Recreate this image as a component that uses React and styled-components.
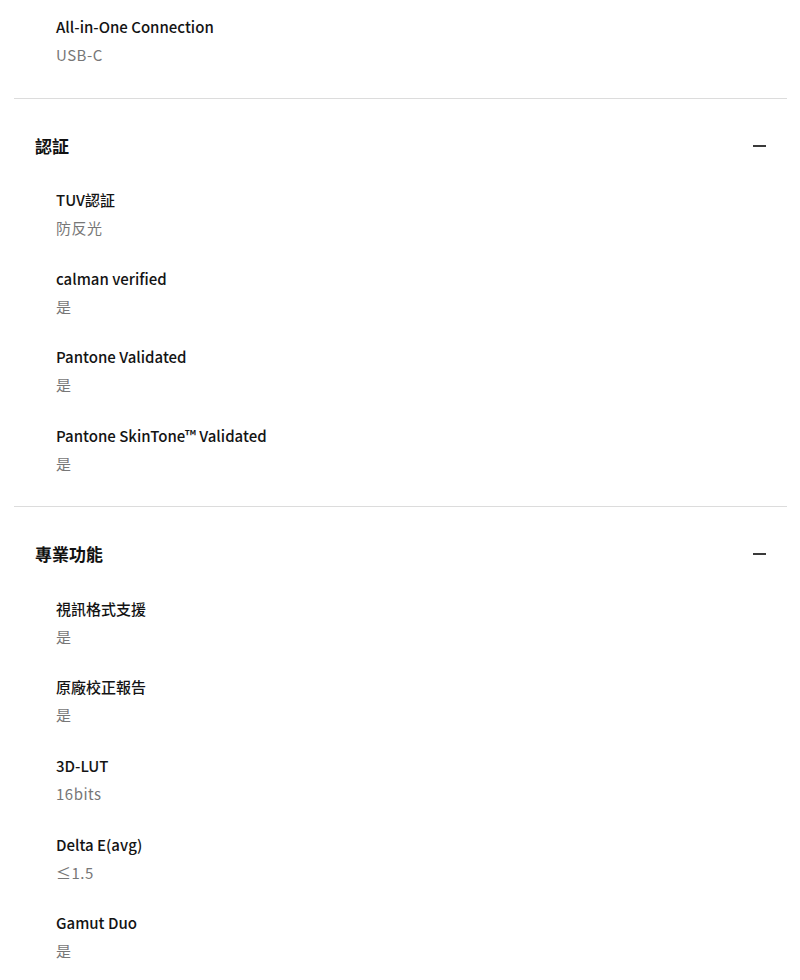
import styled, { createGlobalStyle } from "styled-components";

const GlobalStyle = createGlobalStyle`
  body {
    margin: 0;
    background: #fff;
    font-family: "Noto Sans CJK TC", "Noto Sans", sans-serif;
    color: #111;
  }
`;

const StyledPage = styled.div`
  padding: 0 13px 0 14px;
`;

const StyledSection = styled.section`
  border-bottom: 1px solid #dcdcdc;

  &:last-child {
    border-bottom: none;
  }
`;

const StyledSectionHead = styled.div`
  display: flex;
  align-items: center;
  justify-content: space-between;
  padding: 35px 21px 0 21px;
  height: 24px;
  box-sizing: content-box;
`;

const StyledSectionTitle = styled.h3`
  margin: 0;
  font-size: 17px;
  line-height: 24px;
  font-weight: 700;
  color: #111;
`;

const StyledMinus = styled.span`
  display: block;
  width: 13px;
  height: 2px;
  background-color: #3a3a3a;
`;

const StyledSpecList = styled.ul`
  list-style-type: none;
  margin: 0;
  padding: ${(props) => (props.$top ? "15px" : "30.5px")} 0 30.5px 42px;
  display: flex;
  flex-direction: column;
  gap: 26.6px;
`;

const StyledSpecItem = styled.li`
  display: flex;
  flex-direction: column;
  gap: 4px;
`;

const StyledSpecLabel = styled.div`
  font-size: 15px;
  line-height: 24px;
  font-weight: 500;
  color: #141414;
`;

const StyledSpecValue = styled.div`
  font-size: 15px;
  line-height: 24px;
  font-weight: 400;
  letter-spacing: 0.5px;
  color: #777;
`;

const sections = [
  {
    title: null,
    items: [["All-in-One Connection", "USB-C"]],
  },
  {
    title: "認証",
    items: [
      ["TUV認証", "防反光"],
      ["calman verified", "是"],
      ["Pantone Validated", "是"],
      ["Pantone SkinTone™ Validated", "是"],
    ],
  },
  {
    title: "專業功能",
    items: [
      ["視訊格式支援", "是"],
      ["原廠校正報告", "是"],
      ["3D-LUT", "16bits"],
      ["Delta E(avg)", "≤1.5"],
      ["Gamut Duo", "是"],
    ],
  },
];

const App = () => {
  return (
    <>
      <GlobalStyle />
      <StyledPage>
        {sections.map((section, i) => (
          <StyledSection key={i}>
            {section.title && (
              <StyledSectionHead>
                <StyledSectionTitle>{section.title}</StyledSectionTitle>
                <StyledMinus />
              </StyledSectionHead>
            )}
            <StyledSpecList $top={!section.title}>
              {section.items.map(([label, value]) => (
                <StyledSpecItem key={label}>
                  <StyledSpecLabel>{label}</StyledSpecLabel>
                  <StyledSpecValue>{value}</StyledSpecValue>
                </StyledSpecItem>
              ))}
            </StyledSpecList>
          </StyledSection>
        ))}
      </StyledPage>
    </>
  );
};

export default App;
